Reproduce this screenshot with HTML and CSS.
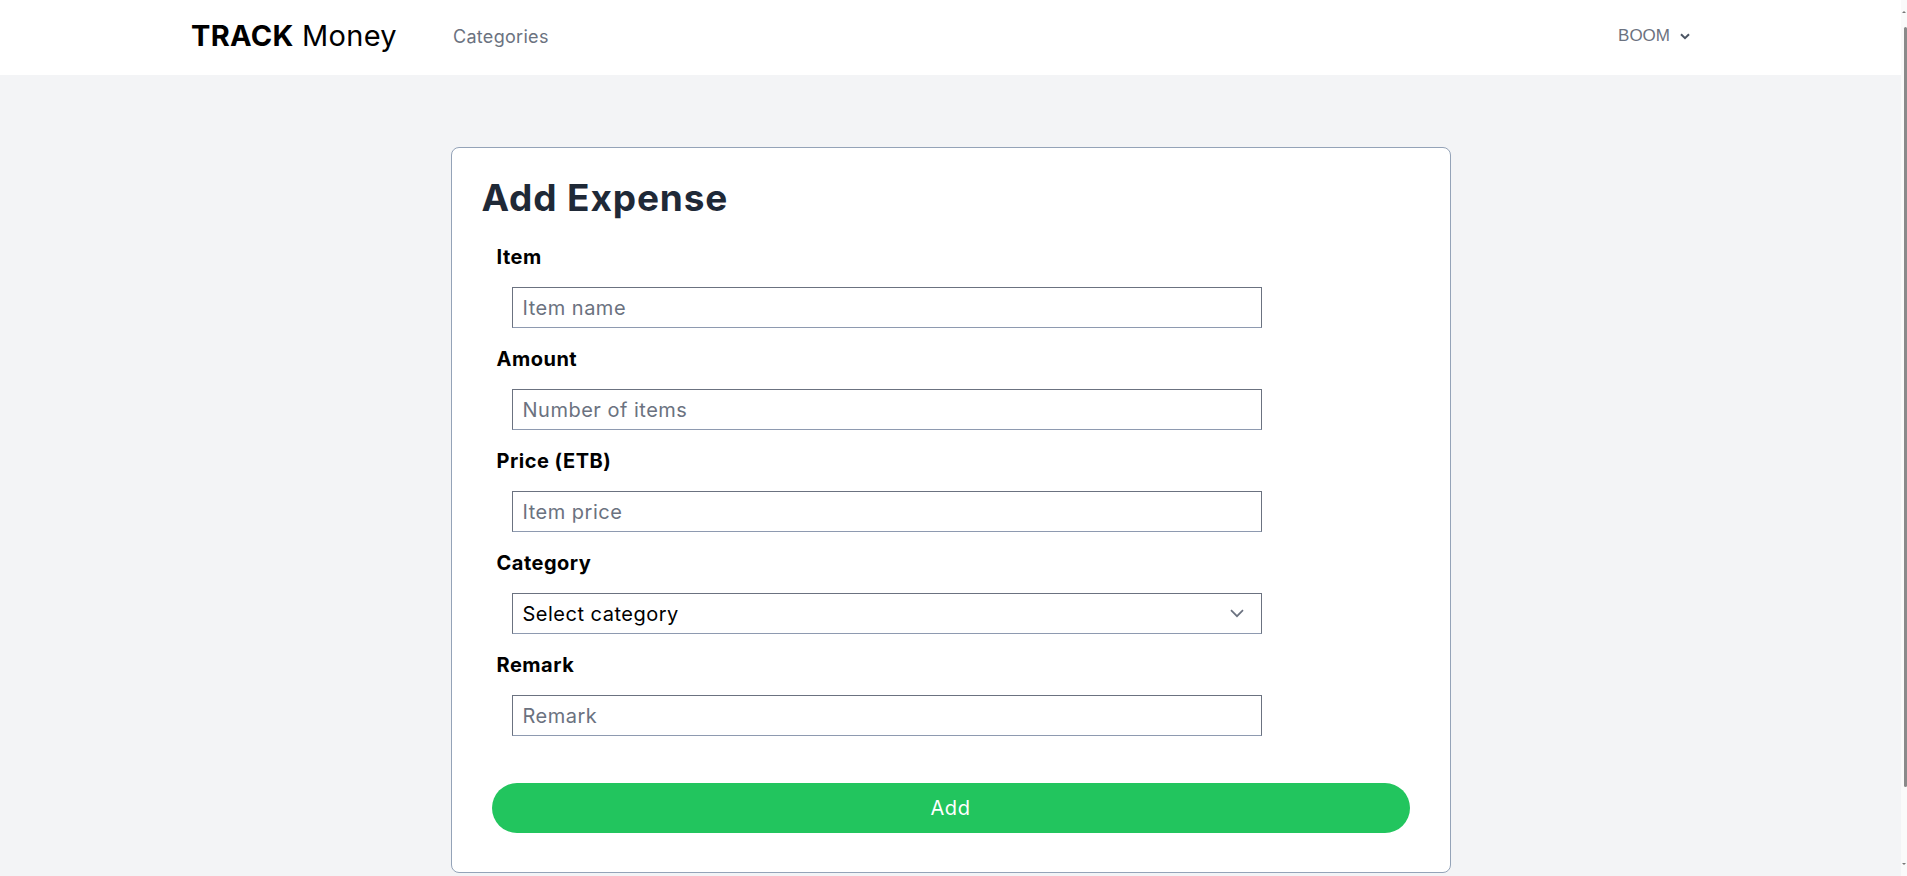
FILE: index.html
```html
<!DOCTYPE html>
<html lang="en">
<head>
<meta charset="utf-8">
<title>TRACK Money - Add Expense</title>
<link rel="stylesheet" href="styles.css">
</head>
<body>
<header class="topbar">
  <div class="brand"><span class="brand-strong">TRACK</span> Money</div>
  <nav class="nav"><a class="nav-link" href="#">Categories</a></nav>
  <div class="user">
    <span class="user-name">BOOM</span>
    <svg class="user-chevron" width="10" height="7" viewBox="0 0 10 7"><path d="M1 1.2 L5 5.2 L9 1.2" fill="none" stroke="#4b5563" stroke-width="2"/></svg>
  </div>
</header>
<main class="main">
  <section class="card">
    <h1 class="card-title">Add Expense</h1>
    <form class="form">
      <div class="field">
        <label class="label">Item</label>
        <input class="control" type="text" placeholder="Item name">
      </div>
      <div class="field">
        <label class="label">Amount</label>
        <input class="control" type="text" placeholder="Number of items">
      </div>
      <div class="field">
        <label class="label">Price (ETB)</label>
        <input class="control" type="text" placeholder="Item price">
      </div>
      <div class="field">
        <label class="label">Category</label>
        <div class="select-wrap">
          <select class="control select">
            <option>Select category</option>
          </select>
          <svg class="select-chevron" width="14" height="9" viewBox="0 0 14 9"><path d="M1 1.2 L7 7.2 L13 1.2" fill="none" stroke="#6b7280" stroke-width="1.7"/></svg>
        </div>
      </div>
      <div class="field">
        <label class="label">Remark</label>
        <input class="control" type="text" placeholder="Remark">
      </div>
      <button class="btn" type="button">Add</button>
    </form>
  </section>
</main>
<div class="scrollbar" aria-hidden="true">
  <span class="scroll-arrow scroll-arrow-up"></span>
  <span class="scroll-thumb"></span>
  <span class="scroll-arrow scroll-arrow-down"></span>
</div>
</body>
</html>
```
FILE: styles.css
```css
html {
  background: #f3f4f6;
}
body {
  margin: 0;
  font-family: Inter, "Noto Sans", sans-serif;
  background: #f3f4f6;
  color: #000;
}
.topbar {
  height: 75px;
  background: #fff;
  display: flex;
  align-items: center;
  padding: 0 217px 0 191px;
}
.brand {
  width: 206px;
  font-size: 29px;
  white-space: nowrap;
  color: #000;
  letter-spacing: 0.3px;
  margin-top: -5px;
}
.brand-strong {
  font-weight: 700;
}
.nav {
  margin-left: 56px;
  flex: 1;
  margin-top: -3px;
}
.nav-link {
  font-size: 18px;
  color: #6b7280;
  text-decoration: none;
  letter-spacing: 0.3px;
}
.user {
  display: flex;
  align-items: center;
  gap: 10px;
  margin-top: -4px;
}
.user-name {
  font-family: "Liberation Sans", Arial, sans-serif;
  font-size: 17px;
  color: #6b7280;
}
.user-chevron {
  display: block;
  margin-top: 1px;
}
.main {
  padding: 72px 6px 98px 0;
}
.card {
  width: 1000px;
  box-sizing: border-box;
  margin: 0 auto;
  background: #fff;
  border: 1px solid #94a3b8;
  border-radius: 8px;
  padding: 26px 30px 39px;
}
.card-title {
  margin: 0 0 21px;
  font-size: 37px;
  line-height: 48px;
  font-weight: 700;
  color: #1f2937;
  letter-spacing: 0.85px;
}
.form {
  display: flex;
  flex-direction: column;
}
.field {
  display: flex;
  flex-direction: column;
  align-items: flex-start;
  margin-bottom: 17px;
}
.field:last-of-type {
  margin-bottom: 0;
}
.label {
  margin-left: 15px;
  font-size: 20px;
  line-height: 28px;
  font-weight: 700;
  color: #000;
  margin-bottom: 16px;
  letter-spacing: 0.5px;
}
.control {
  margin-left: 30px;
  width: 750px;
  height: 41px;
  box-sizing: border-box;
  border: 1px solid #6b7280;
  border-bottom-color: #8e9ab0;
  border-radius: 0;
  padding: 0 10px;
  font-family: Inter, "Noto Sans", sans-serif;
  font-size: 20px;
  letter-spacing: 0.5px;
  color: #000;
  background: #fff;
  outline: none;
}
.control::placeholder {
  color: #6b7280;
}
.select-wrap {
  position: relative;
}
.select {
  appearance: none;
  -webkit-appearance: none;
  display: block;
}
.select-chevron {
  position: absolute;
  right: 18px;
  top: 16px;
}
.btn {
  margin: 47px 10px 0;
  height: 50px;
  border: none;
  border-radius: 25px;
  background: #22c55e;
  color: #fff;
  font-family: Inter, "Noto Sans", sans-serif;
  font-size: 20px;
  letter-spacing: 0.6px;
  cursor: pointer;
}
.scrollbar {
  position: fixed;
  top: 0;
  right: 0;
  width: 6px;
  height: 100%;
  background: #fafafa;
}
.scroll-thumb {
  position: absolute;
  top: 27px;
  right: 0;
  width: 3px;
  height: 760px;
  border-radius: 2px;
  background: #8a8a8a;
}
.scroll-arrow {
  position: absolute;
  right: 1px;
  width: 0;
  height: 0;
  border-left: 2px solid transparent;
  border-right: 2px solid transparent;
}
.scroll-arrow-up {
  top: 11px;
  border-bottom: 2px solid #777;
}
.scroll-arrow-down {
  bottom: 11px;
  border-top: 2px solid #777;
}
```
